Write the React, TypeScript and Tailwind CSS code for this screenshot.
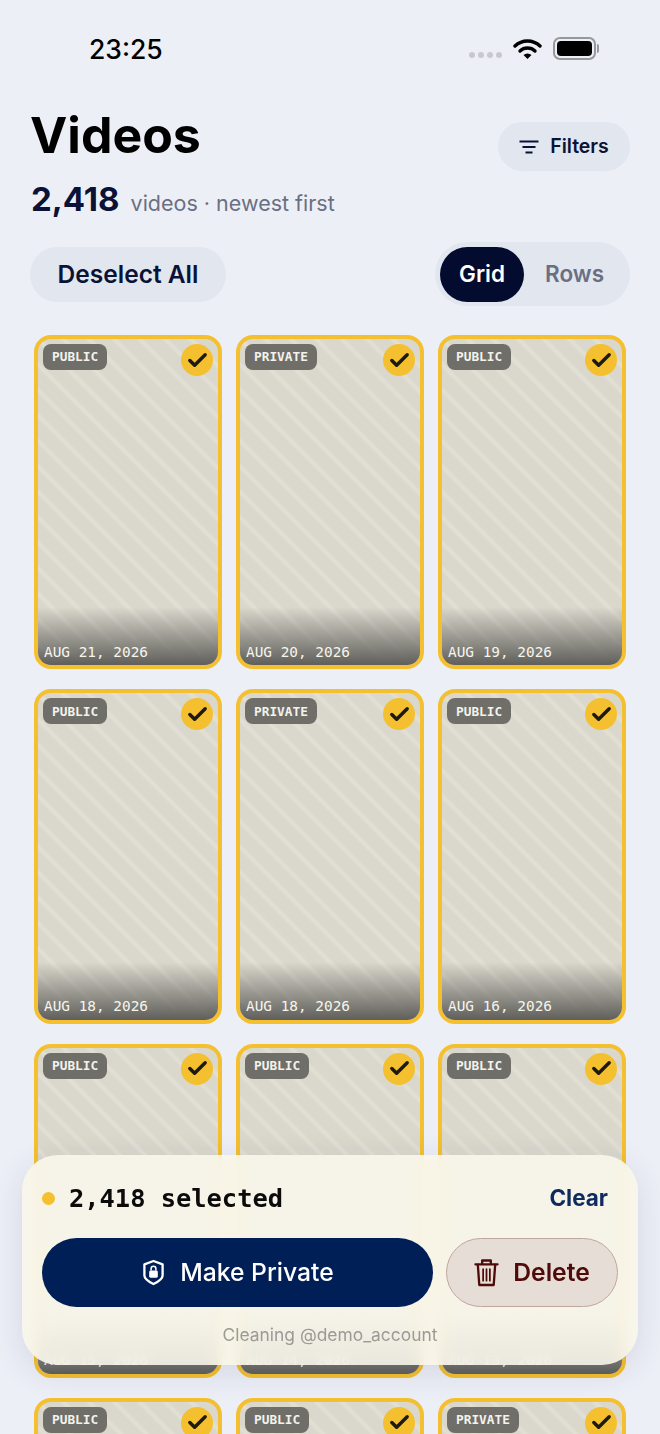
import { Check } from "lucide-react";

const cards = [
  { tag: "PUBLIC", date: "AUG 21, 2026" },
  { tag: "PRIVATE", date: "AUG 20, 2026" },
  { tag: "PUBLIC", date: "AUG 19, 2026" },
  { tag: "PUBLIC", date: "AUG 18, 2026" },
  { tag: "PRIVATE", date: "AUG 18, 2026" },
  { tag: "PUBLIC", date: "AUG 16, 2026" },
  { tag: "PUBLIC", date: "AUG 15, 2026" },
  { tag: "PUBLIC", date: "AUG 14, 2026" },
  { tag: "PUBLIC", date: "AUG 13, 2026" },
  { tag: "PUBLIC", date: "AUG 12, 2026" },
  { tag: "PUBLIC", date: "AUG 11, 2026" },
  { tag: "PRIVATE", date: "AUG 10, 2026" },
];

function VideoCard({ tag, date }: { tag: string; date: string }) {
  return (
    <div className="relative h-[334.3px] overflow-hidden rounded-[17px] border-4 border-[#f4c02f] bg-[repeating-linear-gradient(45deg,#dad8cc_0px,#dad8cc_11px,#e2e0d5_14px,#e2e0d5_15px,#dad8cc_18px)]">
      <div className="absolute inset-x-0 bottom-0 h-[58px] bg-gradient-to-b from-transparent to-[#5f5e5a]" />
      <span className="absolute left-[5px] top-[5px] flex h-[26px] items-center rounded-lg bg-[#6f6e69] px-[9px] font-['DejaVu_Sans_Mono',monospace] text-[12.8px] font-bold text-[#f3f2ec]">
        {tag}
      </span>
      <span className="absolute right-[5px] top-[5px] flex h-8 w-8 items-center justify-center rounded-full bg-[#f4c02f]">
        <Check size={23} strokeWidth={3.6} className="text-[#1c1a12]" />
      </span>
      <span className="absolute bottom-[2px] left-[6px] font-['DejaVu_Sans_Mono',monospace] text-[14.4px] font-normal text-[#f6f5ef]">
        {date}
      </span>
    </div>
  );
}

function WifiIcon() {
  return (
    <svg width="29" height="22" viewBox="0 0 29 22" fill="none" className="text-black">
      <path d="M2 8 A18 18 0 0 1 27 8" stroke="currentColor" strokeWidth="3.4" strokeLinecap="round" />
      <path d="M7 13 A11 11 0 0 1 22 13" stroke="currentColor" strokeWidth="3.4" strokeLinecap="round" />
      <path d="M14.5 21 L10.5 17 A6 6 0 0 1 18.5 17 Z" fill="currentColor" />
    </svg>
  );
}

function FilterLines() {
  return (
    <svg width="20" height="14" viewBox="0 0 20 14" fill="none" stroke="#0a1236" strokeWidth="2">
      <path d="M0.500 1.500 H19.500 M3.500 7 H16.500 M6.500 12.500 H13.500" />
    </svg>
  );
}

function ShieldLock() {
  return (
    <svg width="23" height="27" viewBox="0 0 24 28" fill="none">
      <path d="M12 2 L21.500 5.500 V17 C21.500 20.500 16 24 12 26 C8 24 2.500 20.500 2.500 17 V5.500 Z" stroke="#fff" strokeWidth="2.400" strokeLinejoin="round" />
      <rect x="7.500" y="12" width="9" height="7.500" rx="1.500" fill="#fff" />
      <path d="M9.500 12 V10 A2.500 2.500 0 0 1 14.500 10 V12" stroke="#fff" strokeWidth="1.600" />
    </svg>
  );
}

function TrashIcon() {
  return (
    <svg width="25" height="29" viewBox="0 0 26 30" fill="none" stroke="#4f0a0a" strokeWidth="2.400" strokeLinecap="round" strokeLinejoin="round">
      <path d="M1.500 6.500 H24.500" />
      <path d="M8.500 6 V2.500 H17.500 V6" />
      <path d="M4 7 L5.500 28 H20.500 L22 7" />
      <path d="M9.500 11.500 V23.500 M13 11.500 V23.500 M16.500 11.500 V23.500" strokeWidth="1.800" />
    </svg>
  );
}

export default function App() {
  return (
    <div className="relative h-[1434px] w-[660px] overflow-hidden bg-[#edeff7] font-['Inter',sans-serif]">
      <div className="flex h-[98px] items-start justify-between pl-[89px] pr-[61px] pt-[32px]">
        <span className="text-[26.500px] font-medium leading-[34px] text-black">23:25</span>
        <div className="flex items-center gap-[11px] pt-[5px]">
          <div className="mt-[13px] flex gap-[2.500px]">
            <i className="h-[6px] w-[6.500px] rounded-full bg-[#c8c9ce]" />
            <i className="h-[6px] w-[6.500px] rounded-full bg-[#c8c9ce]" />
            <i className="h-[6px] w-[6.500px] rounded-full bg-[#c8c9ce]" />
            <i className="h-[6px] w-[6.500px] rounded-full bg-[#c8c9ce]" />
          </div>
          <WifiIcon />
          <div className="flex items-center">
            <div className="h-[23px] w-[43px] rounded-[7px] border-2 border-[#97989c] p-[2px]">
              <div className="h-full w-full rounded-[4px] bg-black" />
            </div>
            <div className="ml-px h-[9px] w-[2px] rounded-r bg-[#97989c]" />
          </div>
        </div>
      </div>

      <div className="flex items-start justify-between pl-[31px] pr-[30px]">
        <div>
          <h1 className="-ml-px mt-[7px] text-[50px] font-bold leading-[60px] text-black">Videos</h1>
          <p className="mt-[12px] flex items-baseline gap-[11px] leading-[44px]">
            <span className="text-[33px] font-bold text-[#0a1236]">2,418</span>
            <span className="text-[21.500px] text-[#6a6f82]">videos · newest first</span>
          </p>
        </div>
        <button className="mt-[24px] flex h-[49px] w-[132px] items-center justify-center gap-[11px] rounded-full bg-[#e1e6ef] text-[19.500px] font-semibold text-[#0a1236]">
          <FilterLines />
          Filters
        </button>
      </div>

      <div className="mt-[17px] flex items-center justify-between pl-[30px] pr-[30px]">
        <button className="h-[55px] w-[196px] rounded-full bg-[#e1e6ef] text-[24.500px] font-semibold text-[#0a1236]">
          Deselect All
        </button>
        <div className="flex h-[64px] w-[195px] items-center rounded-full bg-[#e1e6ef] p-[5px]">
          <span className="flex h-[55px] w-[84px] items-center justify-center rounded-full bg-[#030c2e] text-[22.500px] font-semibold text-white">
            Grid
          </span>
          <span className="flex-1 text-center text-[22.500px] font-semibold text-[#6a6f82]">Rows</span>
        </div>
      </div>

      <div className="mt-[29px] grid grid-cols-3 gap-x-[14px] gap-y-[20px] px-[34px]">
        {cards.map((c, i) => (
          <VideoCard key={i} tag={c.tag} date={c.date} />
        ))}
      </div>

      <div className="absolute left-[22px] top-[1155px] h-[210px] w-[616px] rounded-[36px] bg-[#f9f7ec]/88 px-[20px] pt-[26px] shadow-[0_8px_32px_rgba(30,40,80,0.12)] backdrop-blur-sm">
        <div className="flex items-center justify-between pr-[10px]">
          <div className="flex items-center gap-[14px]">
            <span className="h-[13px] w-[13px] rounded-full bg-[#f4c02f]" />
            <span className="font-['DejaVu_Sans_Mono',monospace] text-[25.400px] font-bold leading-[34px] text-[#0b0b0b]">2,418 selected</span>
          </div>
          <span className="text-[22.500px] font-bold text-[#0f2a5f]">Clear</span>
        </div>
        <div className="mt-[23px] flex gap-[13px]">
          <button className="flex h-[69px] w-[391px] items-center justify-center gap-[15px] rounded-full bg-[#001f56] pl-px text-[24.700px] font-medium text-white">
            <ShieldLock />
            Make Private
          </button>
          <button className="flex h-[69px] w-[172px] items-center justify-center gap-[14px] rounded-full border border-[#bda79f] bg-[#e6ddd6] text-[24.700px] font-semibold text-[#4f0a0a]">
            <TrashIcon />
            Delete
          </button>
        </div>
        <p className="mt-[16px] text-center text-[17.400px] leading-[24px] text-[#9b9a96]">Cleaning @demo_account</p>
      </div>
    </div>
  );
}
